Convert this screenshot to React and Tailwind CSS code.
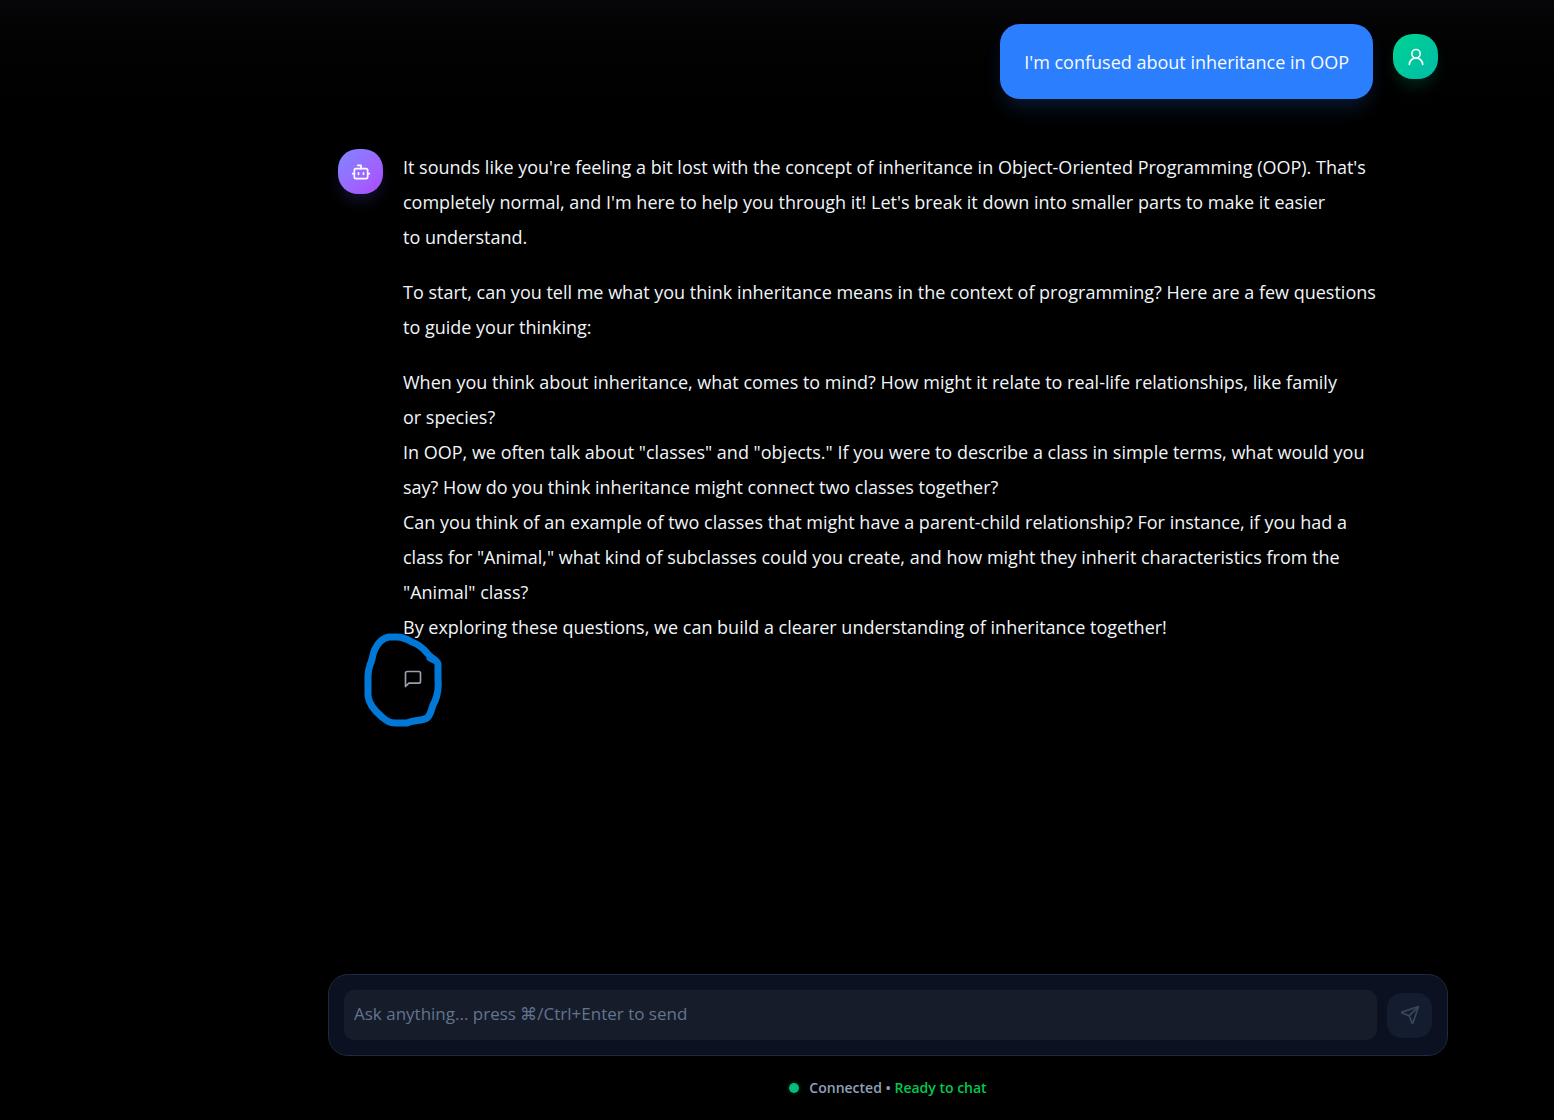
import { Bot, Send, UserRound } from "lucide-react";

const font = "font-['Open_Sans','Noto_Sans',sans-serif]";

function Lines({ lines }) {
  return (
    <p>
      {lines.map((line) => (
        <span key={line} className="block">
          {line}
        </span>
      ))}
    </p>
  );
}

function UserMessage({ children }) {
  return (
    <article className="flex items-start justify-end gap-5 px-2.5">
      <p className="rounded-[20px] bg-[#2b7fff] px-6 pt-[21px] pb-[19px] text-lg leading-[35px] text-slate-50 shadow-[0_12px_20px_-4px_rgba(43,127,255,0.2)]">
        {children}
      </p>
      <div className="mt-2.5 flex size-[45px] shrink-0 items-center justify-center rounded-[20px] bg-linear-to-br from-[#00d492] to-[#00bba7] text-white shadow-[0_10px_16px_-3px_rgba(0,188,125,0.2)]">
        <UserRound size={20} />
      </div>
    </article>
  );
}

function AssistantMessage() {
  return (
    <article className="mt-[50px] flex items-start gap-5 px-2.5">
      <div className="flex size-[45px] shrink-0 items-center justify-center rounded-[20px] bg-linear-to-br from-[#7c86ff] to-[#ad46ff] text-white shadow-[0_10px_16px_-3px_rgba(97,95,255,0.2)]">
        <Bot size={20} />
      </div>
      <div className="min-w-0 flex-1 pt-px">
        <div className="flex flex-col gap-5 text-lg leading-[35px] text-slate-100">
          <Lines
            lines={[
              "It sounds like you're feeling a bit lost with the concept of inheritance in Object-Oriented Programming (OOP). That's",
              "completely normal, and I'm here to help you through it! Let's break it down into smaller parts to make it easier",
              "to understand.",
            ]}
          />
          <Lines
            lines={[
              "To start, can you tell me what you think inheritance means in the context of programming? Here are a few questions",
              "to guide your thinking:",
            ]}
          />
          <Lines
            lines={[
              "When you think about inheritance, what comes to mind? How might it relate to real-life relationships, like family",
              "or species?",
              'In OOP, we often talk about "classes" and "objects." If you were to describe a class in simple terms, what would you',
              "say? How do you think inheritance might connect two classes together?",
              "Can you think of an example of two classes that might have a parent-child relationship? For instance, if you had a",
              'class for "Animal," what kind of subclasses could you create, and how might they inherit characteristics from the',
              '"Animal" class?',
              "By exploring these questions, we can build a clearer understanding of inheritance together!",
            ]}
          />
        </div>
        <div className="relative mt-6 size-5">
          <button type="button" aria-label="Comment" className="block text-[#99a1af]">
            <svg width="20" height="20" viewBox="0 0 24 24" fill="none" stroke="currentColor" strokeWidth="2" strokeLinecap="round" strokeLinejoin="round">
              <path d="M21 15a2 2 0 0 1-2 2H7l-4 4V5a2 2 0 0 1 2-2h14a2 2 0 0 1 2 2z" />
            </svg>
          </button>
          <svg
            className="pointer-events-none absolute -top-10 -left-11"
            width="90"
            height="100"
            viewBox="0 0 90 100"
            fill="none"
            stroke="#0078d7"
            strokeWidth="7"
            strokeLinecap="round"
            strokeLinejoin="round"
            aria-hidden="true"
          >
            <path d="M77 32C74 29 71 28 68 24C63 18 59 15 53 13C46 9 43 8 38 8H30C24 9 19 14 16 20C13 26 14 30 11 36C10 39 9 42 9 47V67C10 76 17 83 23 88C28 92 30 94 36 94H48C55 91 63 92 68 89C73 85 72 78 76 72C79 65 80 60 79 50V35C78 31 74 31 71 29" />
          </svg>
        </div>
      </div>
    </article>
  );
}

function Composer() {
  return (
    <form
      onSubmit={(e) => e.preventDefault()}
      className="flex items-center gap-2.5 rounded-[20px] border border-[#1d293d] bg-[#0b1120] p-[15px]"
    >
      <input
        type="text"
        aria-label="Message"
        placeholder="Ask anything... press ⌘/Ctrl+Enter to send"
        className="h-[50px] min-w-0 flex-1 rounded-[10px] bg-[#171c2a] px-2.5 pb-1 text-[17px] text-slate-100 outline-none placeholder:text-[#62748e]"
      />
      <button
        type="submit"
        aria-label="Send"
        className="flex size-[45px] shrink-0 items-center justify-center rounded-[15px] bg-[#141d2f] text-[#3a475a]"
      >
        <Send size={20} />
      </button>
    </form>
  );
}

export default function App() {
  return (
    <div className={`${font} flex min-h-screen flex-col bg-black bg-linear-to-b from-[#060608] to-black to-15% pl-[222px]`}>
      <main className="mx-auto w-full max-w-[1120px] flex-1 pt-6">
        <UserMessage>I'm confused about inheritance in OOP</UserMessage>
        <AssistantMessage />
      </main>
      <footer className="mx-auto w-full max-w-[1120px] pb-5">
        <Composer />
        <div className="mt-5 flex items-center justify-center gap-2.5 text-sm leading-6 font-semibold">
          <span className="size-2.5 rounded-full bg-[#00bc7d] shadow-[0_0_4px_rgba(0,188,125,0.3)]" />
          <p className="text-[#90a1b9]">
            Connected • <span className="text-[#00c950]">Ready to chat</span>
          </p>
        </div>
      </footer>
    </div>
  );
}
